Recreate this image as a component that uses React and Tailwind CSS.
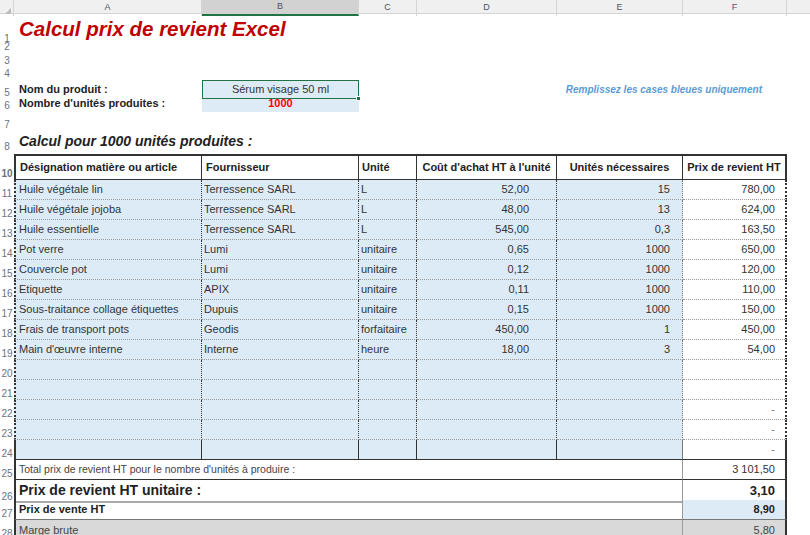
const G = "grid grid-cols-[14px_188px_157px_58px_140px_126px_104px_1fr]";
const F = { fontFamily: '"Liberation Sans", Arial, sans-serif' };

function RN({ n, cls = "" }) {
  return <div className={`flex items-end justify-center pb-[1px] text-[10px] leading-none text-gray-500 ${cls}`}>{n}</div>;
}

const items = [
  ["Huile végétale lin", "Terressence SARL", "L", "52,00", "15", "780,00"],
  ["Huile végétale jojoba", "Terressence SARL", "L", "48,00", "13", "624,00"],
  ["Huile essentielle", "Terressence SARL", "L", "545,00", "0,3", "163,50"],
  ["Pot verre", "Lumi", "unitaire", "0,65", "1000", "650,00"],
  ["Couvercle pot", "Lumi", "unitaire", "0,12", "1000", "120,00"],
  ["Etiquette", "APIX", "unitaire", "0,11", "1000", "110,00"],
  ["Sous-traitance collage étiquettes", "Dupuis", "unitaire", "0,15", "1000", "150,00"],
  ["Frais de transport pots", "Geodis", "forfaitaire", "450,00", "1", "450,00"],
  ["Main d'œuvre interne", "Interne", "heure", "18,00", "3", "54,00"],
  ["", "", "", "", "", ""],
  ["", "", "", "", "", ""],
  ["", "", "", "", "", "-"],
  ["", "", "", "", "", "-"],
  ["", "", "", "", "", "-"],
];

export default function App() {
  const blue = "bg-[#ddebf7]";
  return (
    <div className="w-[810px] h-[535px] overflow-hidden bg-white text-[11px] text-[#222]" style={F}>
      <div className={`${G} h-[14px] bg-[#f0f0f0] text-[9px] text-gray-600 border-b border-[#d4d4d4]`}>
        <div className="border-r border-[#d4d4d4] relative"><div className="absolute right-[2px] bottom-[2px] w-0 h-0 border-l-[6px] border-l-transparent border-b-[6px] border-b-[#bbb]" /></div>
        <div className="flex items-center justify-center border-r border-[#d4d4d4]">A</div>
        <div className="flex items-center justify-center border-r border-[#d4d4d4] bg-[#d2d2d2] border-b-2 border-b-[#217346]">B</div>
        <div className="flex items-center justify-center border-r border-[#d4d4d4]">C</div>
        <div className="flex items-center justify-center border-r border-[#d4d4d4]">D</div>
        <div className="flex items-center justify-center border-r border-[#d4d4d4]">E</div>
        <div className="flex items-center justify-center border-r border-[#d4d4d4]">F</div>
        <div />
      </div>
      <div className={`${G} h-[26px]`}>
        <RN n="1" />
        <div className="col-span-7 flex items-center pl-[5px] text-[20.5px] font-bold italic text-[#c00000] whitespace-nowrap">Calcul prix de revient Excel</div>
      </div>
      <div className={`${G} h-[13px]`}><RN n="2" /></div>
      <div className={`${G} h-[14px]`}><RN n="3" /></div>
      <div className={`${G} h-[13px]`}><RN n="4" /></div>
      <div className={`${G} h-[15px]`}>
        <RN n="5" cls="text-[#217346]" />
        <div className="flex items-center pl-[5px] font-bold">Nom du produit :</div>
        <div className={`${blue} relative flex items-center justify-center border border-[#217346] text-[#333]`}>
          Sérum visage 50 ml
          <div className="absolute -right-[3px] -bottom-[3px] w-[5px] h-[5px] bg-[#217346] border border-white" />
        </div>
        <div />
        <div />
        <div className="col-span-2 flex items-center justify-end pr-[25px] italic font-bold text-[10px] text-[#5b9bd5] whitespace-nowrap">Remplissez les cases bleues uniquement</div>
        <div />
      </div>
      <div className={`${G} h-[14px]`}>
        <RN n="6" />
        <div className="flex items-center pl-[5px] font-bold whitespace-nowrap">Nombre d'unités produites :</div>
        <div className={`${blue} flex items-center justify-center font-bold text-[#ff0000]`}>1000</div>
      </div>
      <div className={`${G} h-[22px]`}><RN n="7" /></div>
      <div className={`${G} h-[19px]`}>
        <RN n="8" />
        <div className="col-span-7 flex items-end pl-[5px] pb-[1px] text-[14px] font-bold italic whitespace-nowrap">Calcul pour 1000 unités produites :</div>
      </div>
      <div className={`${G} h-[4px]`}><div /></div>
      <div className={`${G} h-[26px] font-bold`}>
        <RN n="10" />
        <div className="flex items-center pl-[4px] border-t-2 border-l-2 border-r border-b border-[#333] whitespace-nowrap">Désignation matière ou article</div>
        <div className="flex items-center pl-[4px] border-t-2 border-r border-b border-[#333]">Fournisseur</div>
        <div className="flex items-center pl-[3px] border-t-2 border-r border-b border-[#333]">Unité</div>
        <div className="flex items-center justify-center border-t-2 border-r border-b border-[#333] whitespace-nowrap">Coût d'achat HT à l'unité</div>
        <div className="flex items-center justify-center border-t-2 border-r border-b border-[#333]">Unités nécessaires</div>
        <div className="flex items-center justify-center border-t-2 border-r-2 border-b border-[#333] whitespace-nowrap">Prix de revient HT</div>
        <div />
      </div>
      {items.map((r, i) => {
        const last = i === items.length - 1;
        const bb = last ? "border-b border-b-[#333]" : "border-b border-dotted border-b-[#999]";
        return (
          <div key={i} className={`${G} h-[20px] text-[#333]`}>
            <RN n={String(11 + i)} />
            <div className={`${blue} ${bb} border-l-2 border-l-[#333] border-r border-r-[#333] flex items-center pl-[3px] whitespace-nowrap`}>{r[0]}</div>
            <div className={`${blue} ${bb} border-r border-r-[#333] flex items-center pl-[2px]`}>{r[1]}</div>
            <div className={`${blue} ${bb} border-r border-r-[#333] flex items-center pl-[2px]`}>{r[2]}</div>
            <div className={`${blue} ${bb} border-r border-r-[#333] flex items-center justify-end pr-[27px]`}>{r[3]}</div>
            <div className={`${blue} ${bb} border-r border-r-[#777] flex items-center justify-end pr-[12px]`}>{r[4]}</div>
            <div className={`bg-white ${bb} border-r-2 border-r-[#333] flex items-center justify-end pr-[10px] ${r[5] === "-" ? "text-gray-500" : ""}`}>{r[5]}</div>
            <div />
          </div>
        );
      })}
      <div className={`${G} h-[20px]`}>
        <RN n="25" />
        <div className="col-span-5 flex items-center pl-[3px] border-l-2 border-l-[#333] border-r border-r-[#999] border-b border-b-[#333] text-[10.5px] text-[#444] whitespace-nowrap">Total prix de revient HT pour le nombre d'unités à produire :</div>
        <div className="flex items-center justify-end pr-[10px] border-r-2 border-r-[#333] border-b border-b-[#333] text-[#333]">3 101,50</div>
        <div />
      </div>
      <div className={`${G} h-[20px]`}>
        <RN n="26" />
        <div className="col-span-5 flex items-center pl-[3px] border-l-2 border-l-[#333] border-r border-r-[#999] border-b-2 border-b-[#aaa] text-[14px] font-bold whitespace-nowrap">Prix de revient HT unitaire :</div>
        <div className="flex items-center justify-end pr-[10px] border-r-2 border-r-[#333] border-b-2 border-b-[#aaa] text-[13px] font-bold">3,10</div>
        <div />
      </div>
      <div className={`${G} h-[20px]`}>
        <RN n="27" />
        <div className="col-span-5 flex items-center pl-[3px] border-l-2 border-l-[#333] border-r border-r-[#999] border-b border-b-[#777] font-bold">Prix de vente HT</div>
        <div className={`${blue} flex items-center justify-end pr-[10px] border-r-2 border-r-[#333] border-b border-b-[#777] font-bold`}>8,90</div>
        <div />
      </div>
      <div className={`${G} h-[20px]`}>
        <RN n="28" />
        <div className="col-span-5 flex items-center pl-[3px] bg-[#d9d9d9] border-l-2 border-l-[#333] border-r border-r-[#999] text-[#444]">Marge brute</div>
        <div className="flex items-center justify-end pr-[10px] bg-[#d9d9d9] border-r-2 border-r-[#333] text-[#444]">5,80</div>
        <div />
      </div>
    </div>
  );
}
